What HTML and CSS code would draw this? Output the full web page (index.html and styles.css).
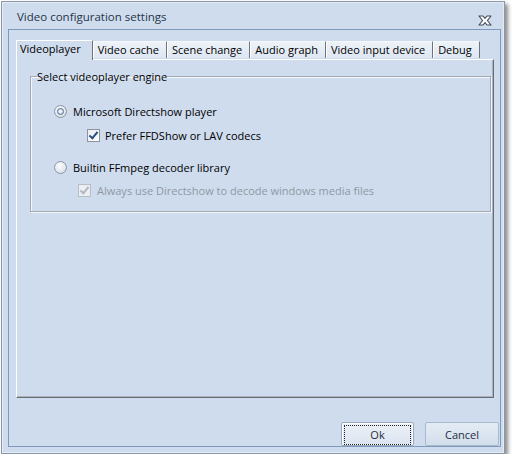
FILE: index.html
```html
<!DOCTYPE html>
<html lang="en">
<head>
    <meta charset="UTF-8">
    <meta name="viewport" content="width=device-width, initial-scale=1.0">
    <title>Video configuration settings</title>
    <link rel="stylesheet" href="styles.css">
</head>
<body>
    <div class="window">
        <!-- Title bar -->
        <div class="titlebar">
            <span class="title">Video configuration settings</span>
            <span class="close">
                <svg width="14" height="11" viewBox="0 0 14 11">
                    <path d="M1 1 H5 L7 3.3 L9 1 H13 L9.4 5.5 L13 10 H9 L7 7.7 L5 10 H1 L4.6 5.5 Z" fill="#fff" stroke="#3f4b5a" stroke-width="1.1" stroke-linejoin="round"/>
                </svg>
            </span>
        </div>

        <div class="frame">
            <!-- Tabs -->
            <div class="tabs">
                <div class="tab active">Videoplayer</div>
                <div class="tab">Video cache</div>
                <div class="tab">Scene change</div>
                <div class="tab">Audio graph</div>
                <div class="tab">Video input device</div>
                <div class="tab">Debug</div>
            </div>

            <div class="panel">
                <fieldset class="group">
                    <legend>Select videoplayer engine</legend>

                    <div class="row radio-row">
                        <span class="radio checked"></span>
                        <span>Microsoft Directshow player</span>
                    </div>
                    <div class="row check-row">
                        <span class="check checked"></span>
                        <span>Prefer FFDShow or LAV codecs</span>
                    </div>
                    <div class="row radio-row second">
                        <span class="radio"></span>
                        <span>Builtin FFmpeg decoder library</span>
                    </div>
                    <div class="row check-row disabled">
                        <span class="check checked"></span>
                        <span>Always use Directshow to decode windows media files</span>
                    </div>
                </fieldset>
            </div>

            <!-- Buttons -->
            <div class="footer">
                <button class="btn default"><span class="focus">Ok</span></button>
                <button class="btn">Cancel</button>
            </div>
        </div>
    </div>
</body>
</html>
```

FILE: styles.css
```css
/* General */
body {
    margin: 0;
    background: #fff;
    font-family: "Open Sans", "Noto Sans", sans-serif;
    font-size: 11px;
    color: #000;
}

.window {
    margin: 1px 0 0 1px;
    width: 502px;
    height: 451px;
    border: 1px solid #8a98aa;
    background: #cfdcee;
    box-shadow: inset 0 0 0 1px #e4ebf5, 3px 3px 4px rgba(0, 0, 0, 0.45);
    display: flex;
    flex-direction: column;
}

.titlebar {
    height: 27px;
    display: flex;
    justify-content: space-between;
    align-items: flex-start;
    padding: 7px 12px 0 15px;
    box-sizing: border-box;
}

.title {
    font-size: 11.5px;
    line-height: 16px;
    color: #263548;
}

.close {
    margin-top: 6px;
    display: flex;
}

.frame {
    flex: 1;
    margin: 0 3px 6px 6px;
    border: 1px solid #7d9abd;
    display: flex;
    flex-direction: column;
    padding: 10px 6px 0 7px;
}

/* Tabs */
.tabs {
    display: flex;
    align-items: flex-end;
    height: 19px;
    position: relative;
    z-index: 1;
}

.tab {
    height: 17px;
    line-height: 16px;
    padding: 0 7px 0 4px;
    background: linear-gradient(#eef3f9, #dde6f2);
    border-top: 1px solid #f4f7fb;
    border-left: 1px solid #fff;
    border-right: 1px solid #6f737a;
    margin-bottom: 1px;
    box-sizing: border-box;
    white-space: nowrap;
}

.tab.active {
    height: 20px;
    margin-bottom: -1px;
    line-height: 15px;
    padding: 0 11px 0 3px;
    background: #cfdcee;
    border-top: 1px solid #fff;
}

.panel {
    height: 339px;
    box-sizing: border-box;
    border-top: 1px solid #fff;
    border-left: 1px solid #fff;
    border-right: 1px solid #696c72;
    border-bottom: 1px solid #696c72;
    box-shadow: inset -1px -1px 0 #a9b3c0;
    padding: 9px 2px 0 13px;
}

/* Group box */
.group {
    margin: 0;
    padding: 0 0 13px 6px;
    border: 1px solid #a2a9b2;
    box-shadow: 1px 1px 0 #f4f7fb, inset 1px 1px 0 #f4f7fb;
    min-width: 0;
}

.group legend {
    padding: 0;
    line-height: 15px;
}

.row {
    display: flex;
    align-items: center;
    height: 16px;
    gap: 6px;
}

.radio-row {
    margin: 19px 0 0 17px;
}

.radio-row.second {
    margin-top: 16px;
}

.check-row {
    margin: 8px 0 0 50px;
    gap: 5px;
}

.check-row.disabled {
    margin: 7px 0 0 41px;
    gap: 6px;
    color: #8e98a4;
}

.radio {
    width: 11px;
    height: 11px;
    border-radius: 50%;
    border: 1px solid #8c97a4;
    background: radial-gradient(circle at 40% 35%, #fdfdfd, #dde3ea 70%, #cfd6df);
    position: relative;
}

.radio.checked::after {
    content: "";
    position: absolute;
    left: 2px;
    top: 2px;
    width: 5px;
    height: 5px;
    border-radius: 50%;
    border: 1px solid #4f6d90;
    background: radial-gradient(circle, #f2f7fc 25%, #a9c0da 95%);
}

.check {
    width: 11px;
    height: 11px;
    border: 1px solid #8e939a;
    background: linear-gradient(135deg, #eaedf1, #fdfdfd);
    position: relative;
}

.check.checked::after {
    content: "";
    position: absolute;
    left: 3px;
    top: 0px;
    width: 3px;
    height: 7px;
    border: solid #2a5182;
    border-width: 0 2px 2px 0;
    transform: rotate(40deg);
}

.disabled .check {
    border-color: #b9bec4;
    background: #eceff2;
}

.disabled .check.checked::after {
    border-color: #b2b8bf;
}

/* Buttons */
.footer {
    margin: auto -5px 0 0;
    display: flex;
    justify-content: flex-end;
    gap: 11px;
}

.btn {
    width: 74px;
    height: 24px;
    font-family: inherit;
    font-size: 11px;
    color: #1f2d3d;
    border: 1px solid #a8b8cd;
    border-radius: 2px;
    background: linear-gradient(#e4ebf4, #d3deec);
    padding: 0;
}

.btn.default {
    width: 73px;
    border-color: #9aabc1;
    box-shadow: inset 0 0 0 1px #fff;
    background: linear-gradient(#edf1f7, #dbe4f0);
}

.btn .focus {
    display: block;
    margin: 2px;
    height: 18px;
    line-height: 18px;
    border: 1px dotted #222;
}
```
